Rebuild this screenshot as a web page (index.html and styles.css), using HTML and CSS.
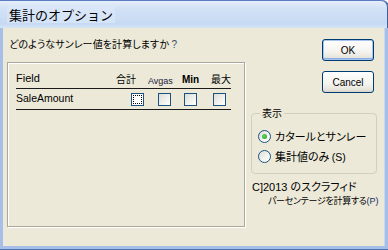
FILE: index.html
```html
<!DOCTYPE html>
<html lang="ja">
<head>
<meta charset="utf-8">
<link rel="stylesheet" href="styles.css">
</head>
<body>
<div class="window">
  <div class="titlebar"><span class="title">集計のオプション</span></div>
  <div class="content">
    <div class="left">
      <p class="question">どのようなサンレー値を計算しますか <span class="q">?</span></p>
      <div class="panel">
        <div class="head">
          <span class="h-field">Field</span>
          <span class="h-jp">合計</span>
          <span class="h-avg">Avgas</span>
          <span class="h-min">Min</span>
          <span class="h-jp">最大</span>
        </div>
        <div class="row">
          <span class="r-field">SaleAmount</span>
          <span class="cb focus"></span>
          <span class="cb"></span>
          <span class="cb"></span>
          <span class="cb"></span>
        </div>
      </div>
    </div>
    <div class="right">
      <button class="btn default">OK</button>
      <button class="btn">Cancel</button>
      <fieldset class="group">
        <legend>表示</legend>
        <div class="radio-row"><span class="radio checked"></span><span>カタールとサンレー</span></div>
        <div class="radio-row"><span class="radio"></span><span>集計値のみ <span class="acc">(S)</span></span></div>
      </fieldset>
      <p class="note1">C]2013 のスクラフィド</p>
      <p class="note2">パーセンテージを計算する<span class="acc2">(P)</span></p>
    </div>
  </div>
</div>
</body>
</html>
```
FILE: styles.css
```css
html, body {
  margin: 0;
  padding: 0;
}
body {
  width: 388px;
  height: 250px;
  overflow: hidden;
  font-family: "Liberation Sans", "Noto Sans CJK JP", sans-serif;
  color: #000;
}
.window {
  width: 388px;
  height: 250px;
  box-sizing: border-box;
  background: #ece9d8;
  border-left: 3px solid #a7bfe8;
  border-right: 3px solid #a7bfe8;
  border-bottom: 4px solid #a7bfe8;
  border-top-right-radius: 7px;
  box-shadow: inset -1px 0 0 #c9d8f1, 1px 0 0 #3e61a0;
  display: flex;
  flex-direction: column;
  position: relative;
}
.window::after {
  content: "";
  position: absolute;
  left: -3px;
  right: -3px;
  bottom: -4px;
  height: 1px;
  background: #4f74b6;
}
.titlebar {
  height: 28px;
  flex: none;
  margin: 0 -3px 0 -3px;
  border-top-right-radius: 7px;
  border-top: 1px solid #5a7cc0;
  border-right: 1px solid #3e61a0;
  box-sizing: border-box;
  background: linear-gradient(#e6eefb 0, #d3e2f6 25%, #c7daf3 85%, #d8e5f7 100%);
  display: flex;
  align-items: center;
  padding-left: 7px;
}
.title {
  font-family: "Noto Sans CJK JP", sans-serif;
  font-size: 13px;
  line-height: 17px;
  padding: 0 2px;
  background: rgba(222, 233, 250, 0.6);
  color: #000;
}
.content {
  display: flex;
  padding: 9px 7px 0 4px;
  gap: 5px;
  flex: 1;
}
.left {
  width: 239px;
  flex: none;
}
.question {
  margin: 0 0 10px 2px;
  font-family: "Noto Sans CJK JP", sans-serif;
  font-size: 10px;
  line-height: 14px;
  font-feature-settings: "palt";
  letter-spacing: 0.1px;
}
.question .q {
  font-family: "Liberation Sans", sans-serif;
  color: #3a4a6a;
}
.panel {
  width: 238px;
  height: 165px;
  box-sizing: border-box;
  border: 1px solid #aca899;
  box-shadow: inset 1px 1px 0 #fff, 1px 1px 0 #fff;
  padding: 0 13px 0 8px;
}
.head {
  margin-top: 9px;
  height: 17px;
  box-sizing: border-box;
  border-bottom: 1px solid #1a1a1a;
  display: grid;
  grid-template-columns: 100px 32px 34px 29px 1fr;
  align-items: start;
  white-space: nowrap;
}
.h-field {
  font-size: 11px;
  line-height: 13px;
}
.h-jp {
  font-family: "Noto Sans CJK JP", sans-serif;
  font-size: 10px;
  line-height: 13px;
}
.h-avg {
  font-size: 9px;
  line-height: 11px;
  margin-top: 4px;
  color: #1a1a40;
}
.h-min {
  font-size: 10px;
  font-weight: bold;
  line-height: 13px;
  margin-top: 1px;
}
.row {
  height: 21px;
  box-sizing: border-box;
  border-bottom: 1px solid #1a1a1a;
  display: grid;
  grid-template-columns: 115px 27px 26px 29px 1fr;
  align-items: start;
}
.r-field {
  font-size: 10.5px;
  line-height: 13px;
  margin-top: 3px;
}
.cb {
  width: 13px;
  height: 13px;
  box-sizing: border-box;
  margin-top: 4px;
  border: 1px solid #1c5180;
  background: linear-gradient(135deg, #dcdcd7 0%, #f2f2ef 60%, #ffffff 100%);
}
.cb.focus {
  background: #fff;
  outline: 1px dotted #000;
  outline-offset: -3px;
}
.right {
  width: 126px;
  flex: none;
  display: flex;
  flex-direction: column;
  white-space: nowrap;
}
.btn {
  align-self: flex-end;
  margin-right: 3px;
  width: 52px;
  height: 22px;
  padding: 0;
  border: 1px solid #003c74;
  border-radius: 3px;
  background: linear-gradient(#ffffff 0%, #f4f3ee 60%, #e6e3da 90%, #d6d0c5 100%);
  font-family: "Liberation Sans", sans-serif;
  font-size: 10px;
  color: #000;
}
.btn.default {
  margin-top: 2px;
  box-shadow: inset 0 0 0 1px #a9c3ef, inset 0 -1px 0 1px #89aee6;
}
.btn + .btn {
  margin-top: 10px;
}
.group {
  margin: 14px 0 0 0;
  padding: 7px 0 7px 6px;
  border: 1px solid #d0d0bf;
  border-radius: 4px;
  min-width: 0;
}
.group legend {
  font-family: "Noto Sans CJK JP", sans-serif;
  font-size: 10px;
  line-height: 12px;
  padding: 0 2px;
  margin-left: 2px;
}
.radio-row {
  height: 20px;
  display: flex;
  align-items: center;
  gap: 4px;
  font-family: "Noto Sans CJK JP", sans-serif;
  font-size: 11px;
  font-feature-settings: "palt";
}
.acc {
  font-family: "Liberation Sans", sans-serif;
  font-size: 10.5px;
}
.radio {
  width: 13px;
  height: 13px;
  box-sizing: border-box;
  border-radius: 50%;
  border: 1px solid #1c5180;
  background: linear-gradient(135deg, #dcdcd7 0%, #f4f4f1 60%, #fff 100%);
  display: flex;
  align-items: center;
  justify-content: center;
  flex: none;
}
.radio.checked::after {
  content: "";
  width: 5px;
  height: 5px;
  border-radius: 50%;
  background: radial-gradient(circle at 40% 40%, #5fd45f, #21a121);
}
.note1 {
  margin: 6px 0 0 1px;
  font-family: "Liberation Sans", "Noto Sans CJK JP", sans-serif;
  font-size: 11px;
  line-height: 14px;
  font-feature-settings: "palt";
}
.note2 {
  margin: 0 0 0 17px;
  font-family: "Noto Sans CJK JP", sans-serif;
  font-size: 9px;
  line-height: 13px;
  font-feature-settings: "palt";
  letter-spacing: -0.3px;
}
.acc2 {
  font-family: "Liberation Sans", sans-serif;
  font-size: 9px;
  letter-spacing: 0;
  color: #1a2a66;
}
```
